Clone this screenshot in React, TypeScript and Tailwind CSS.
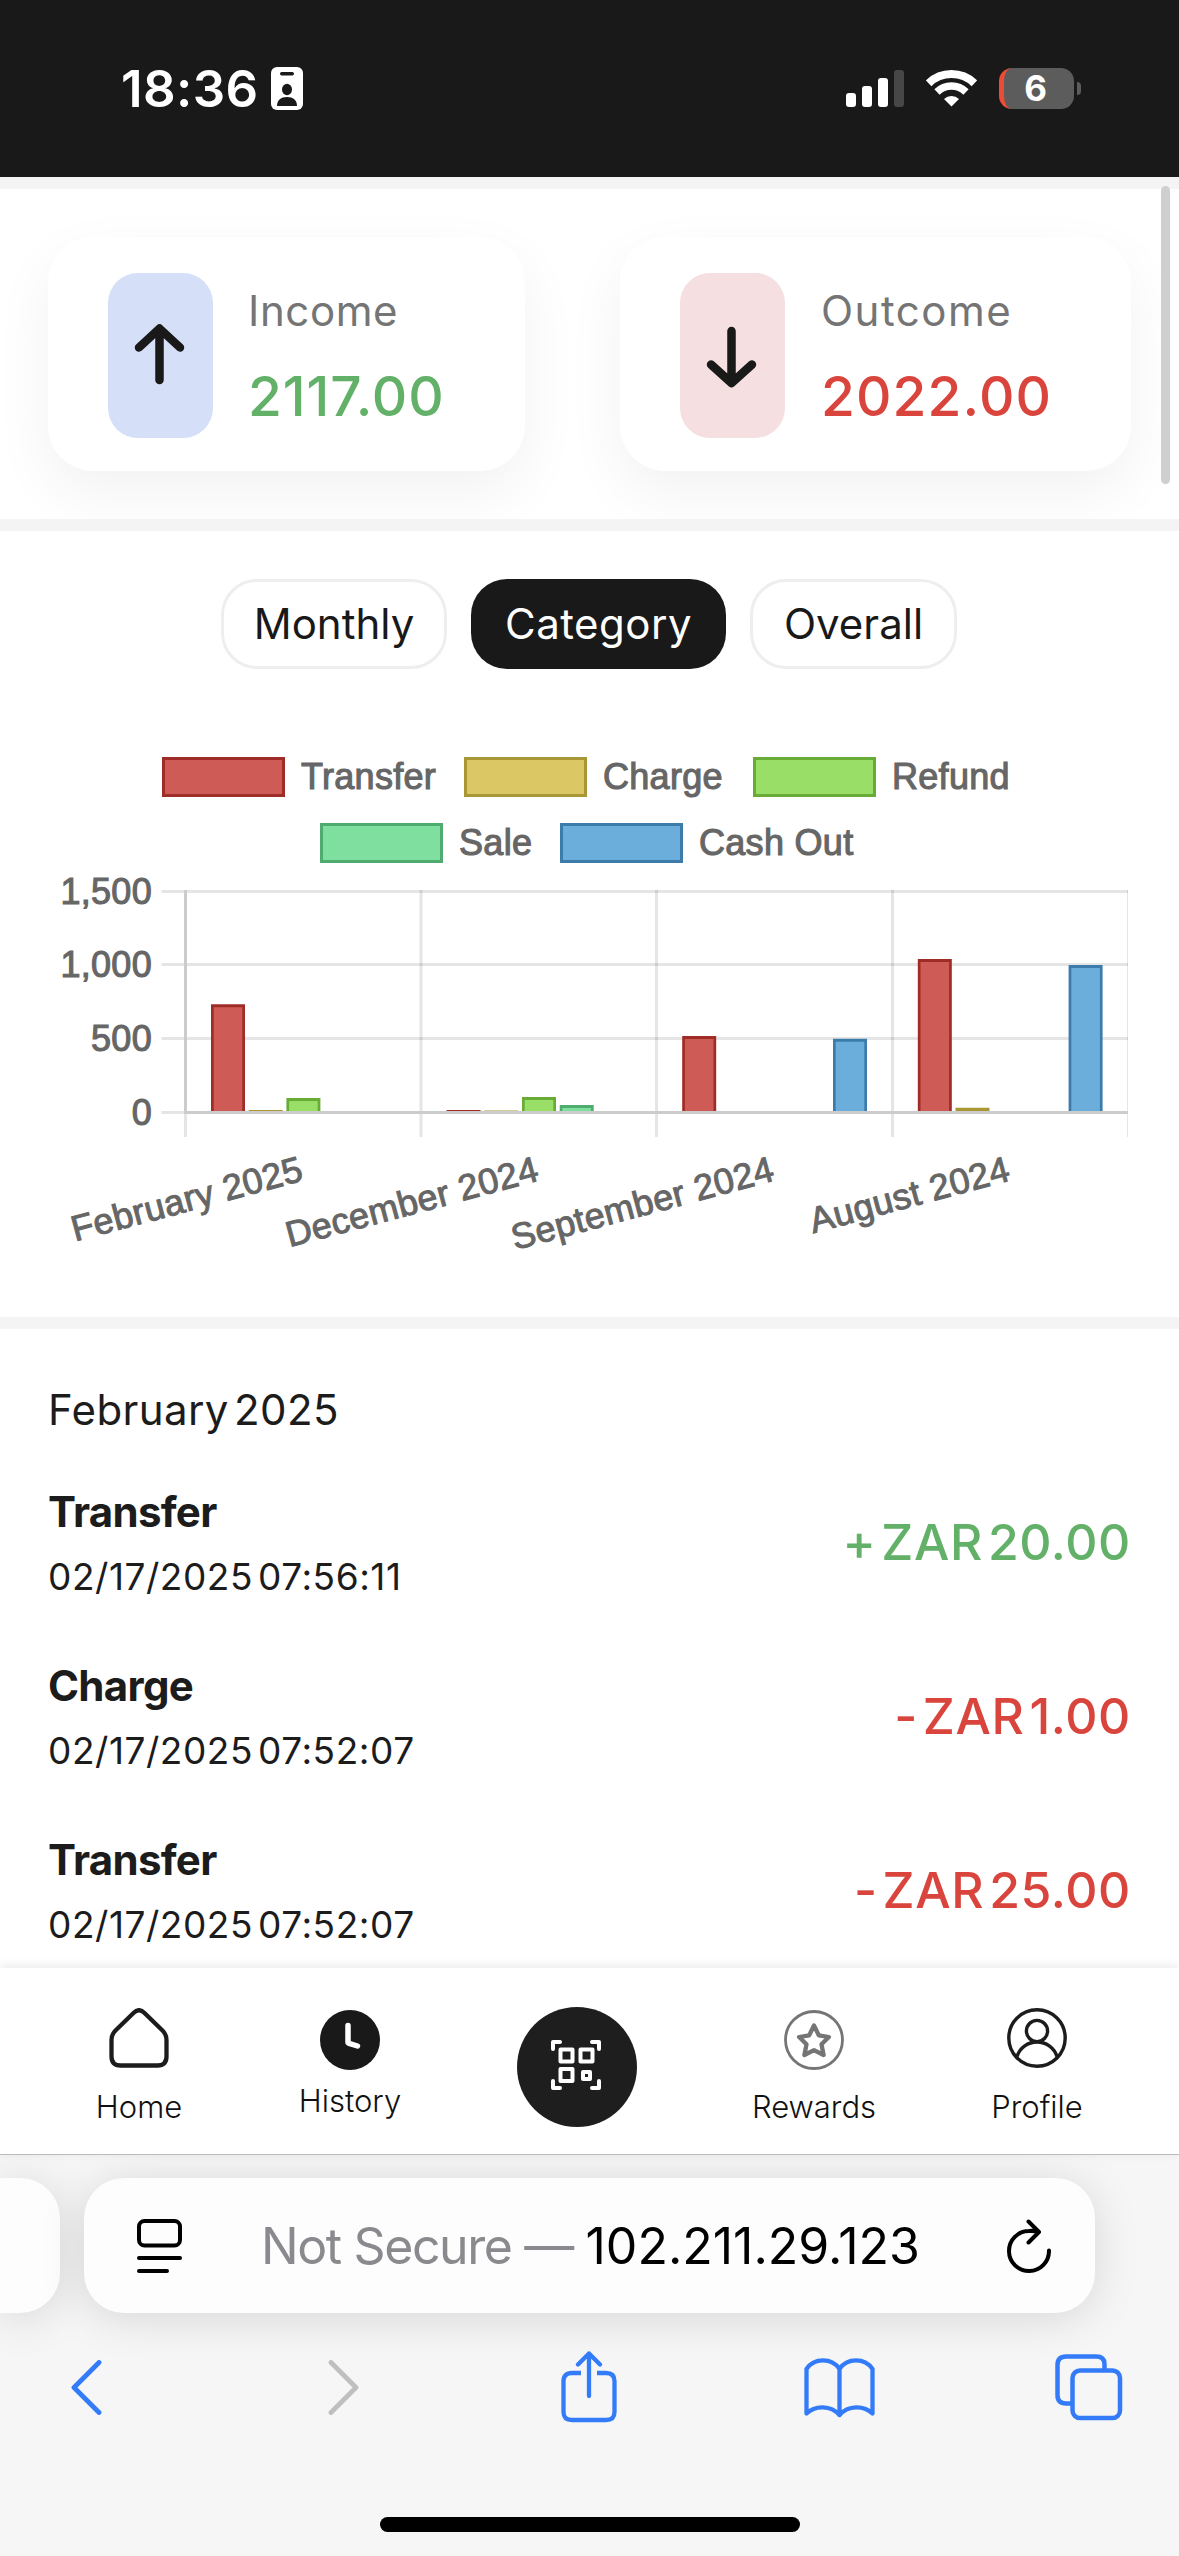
import type { ReactNode } from "react";

const categories = {
  transfer: { label: "Transfer", fill: "#cf5b56", border: "#a02c27" },
  charge: { label: "Charge", fill: "#dbc763", border: "#a99736" },
  refund: { label: "Refund", fill: "#99de66", border: "#68ab37" },
  sale: { label: "Sale", fill: "#7fdf9f", border: "#50ab70" },
  cashOut: { label: "Cash Out", fill: "#6baedb", border: "#3b7cab" },
};

type CategoryKey = keyof typeof categories;

const categoryKeys = Object.keys(categories) as CategoryKey[];

const legend: { key: CategoryKey; x: number; y: number }[] = [
  { key: "transfer", x: 162, y: 757 },
  { key: "charge", x: 464, y: 757 },
  { key: "refund", x: 753, y: 757 },
  { key: "sale", x: 320, y: 823 },
  { key: "cashOut", x: 560, y: 823 },
];

const months: { label: string; values: Partial<Record<CategoryKey, number>> }[] = [
  { label: "February 2025", values: { transfer: 735, charge: 17, refund: 98 } },
  { label: "December 2024", values: { transfer: 17, charge: 14, refund: 105, sale: 51 } },
  { label: "September 2024", values: { transfer: 519, cashOut: 500 } },
  { label: "August 2024", values: { transfer: 1041, charge: 32, cashOut: 1000 } },
];

const ticks = [
  { label: "1,500", y: 891.5 },
  { label: "1,000", y: 964.5 },
  { label: "500", y: 1038.5 },
  { label: "0", y: 1112.5 },
];

const transactions = [
  { title: "Transfer", date: "02/17/2025 07:56:11", amount: "+ ZAR 20.00", type: "in" },
  { title: "Charge", date: "02/17/2025 07:52:07", amount: "- ZAR 1.00", type: "out" },
  { title: "Transfer", date: "02/17/2025 07:52:07", amount: "- ZAR 25.00", type: "out" },
];

function StatusBar() {
  return (
    <header className="flex h-[177px] shrink-0 items-center bg-[#191919] pr-[98px] pb-px pl-[121px] text-white">
      <span className="w-[150px] text-[51px] leading-none font-semibold tracking-[0.4px] whitespace-nowrap">18:36</span>
      <svg width="32" height="43" viewBox="0 0 32 43">
        <rect width="32" height="43" rx="6" fill="#fff" />
        <rect x="9" y="5" width="14" height="3.5" rx="1.7" fill="#191919" />
        <ellipse cx="16" cy="22.5" rx="5" ry="5.7" fill="#191919" />
        <path d="M6 39 C6 33 10 30 16 30 S26 33 26 39 Z" fill="#191919" />
      </svg>
      <div className="ml-auto flex items-center gap-[22px]">
        <svg width="58" height="37" viewBox="0 0 58 37" fill="#fff">
          <rect x="0" y="23" width="10" height="14" rx="3" />
          <rect x="16" y="16" width="10" height="21" rx="3" />
          <rect x="32" y="8" width="10" height="29" rx="3" />
          <rect x="48" y="0" width="10" height="37" rx="3" fill="#474747" />
        </svg>
        <svg width="51" height="37" viewBox="0 0 51 37" fill="none" stroke="#fff">
          <path d="M2.6 13.3 A33 33 0 0 1 48.4 13.3" strokeWidth="8" />
          <path d="M11 22 A20.7 20.7 0 0 1 40 22" strokeWidth="7.5" />
          <path d="M25.5 36.5 L18 29 A11 11 0 0 1 33 29 Z" fill="#fff" stroke="none" />
        </svg>
        <div className="flex items-center gap-[3px]">
          <div className="flex h-[41px] w-[75px] items-center justify-center overflow-hidden rounded-[13px] border-l-[5px] border-[#ec4b36] bg-[#5c5c5c] pr-[7px] text-[35px] leading-none font-bold">
            6
          </div>
          <div className="h-[13px] w-1 rounded-r-full bg-[#5c5c5c]" />
        </div>
      </div>
    </header>
  );
}

function StatCards() {
  return (
    <section className="flex h-[342px] shrink-0 gap-[95px] border-t-[12px] border-[#f4f4f4] px-12 pt-12">
      <div className="flex h-[234px] w-[477px] gap-[35px] rounded-[45px] bg-white pt-9 pl-[60px] shadow-[0_22px_60px_rgba(0,0,0,0.055)]">
        <div className="h-[165px] w-[105px] rounded-[30px] bg-[#d5dff8]">
          <svg width="105" height="165" fill="none" stroke="#191919" strokeWidth="8.5" strokeLinecap="round" strokeLinejoin="round">
            <path d="M51.5 107 V56 M31 74.5 L51.5 55.5 L72 74.5" />
          </svg>
        </div>
        <div className="whitespace-nowrap">
          <div className="text-[42px] leading-[75px] tracking-[0.6px] text-[#757575]">Income</div>
          <div className="text-[55px] leading-[96px] font-medium tracking-[0.9px] text-[#63b168]">2117.00</div>
        </div>
      </div>
      <div className="flex h-[234px] w-[511px] gap-[36px] rounded-[45px] bg-white pt-9 pl-[60px] shadow-[0_22px_60px_rgba(0,0,0,0.055)]">
        <div className="h-[165px] w-[105px] rounded-[30px] bg-[#f6dfe0]">
          <svg width="105" height="165" fill="none" stroke="#191919" strokeWidth="8.5" strokeLinecap="round" strokeLinejoin="round">
            <path d="M51.5 58 V109 M31 91.5 L51.5 110 L72 91.5" />
          </svg>
        </div>
        <div className="whitespace-nowrap">
          <div className="text-[42px] leading-[75px] tracking-[1.5px] text-[#757575]">Outcome</div>
          <div className="text-[55px] leading-[96px] font-medium tracking-[1.1px] text-[#d9453d]">2022.00</div>
        </div>
      </div>
    </section>
  );
}

function CategoryChart() {
  return (
    <svg
      width="1179"
      height="648"
      viewBox="0 669 1179 648"
      className="block font-['Liberation_Sans',sans-serif] text-[36px] tracking-[0.3px]"
    >
      {legend.map(({ key, x, y }) => (
        <g key={key}>
          <rect
            x={x + 1.5}
            y={y + 1.5}
            width="120"
            height="37"
            fill={categories[key].fill}
            stroke={categories[key].border}
            strokeWidth="3"
          />
          <text x={x + 139} y={y + 32} fill="#666" stroke="#666" strokeWidth="1.1">
            {categories[key].label}
          </text>
        </g>
      ))}

      <g stroke="#000" strokeOpacity="0.1" strokeWidth="3">
        {ticks.map(({ y }) => (
          <path key={y} d={`M161.5 ${y} H1128`} />
        ))}
        {[185.5, 421, 656.5, 892.5].map((x) => (
          <path key={x} d={`M${x} 890 V1137`} />
        ))}
        <path d="M1127.5 890 V1137" strokeWidth="1" />
      </g>

      {months.map(({ label, values }, m) => (
        <g key={label}>
          {categoryKeys.map((key, c) => {
            const value = values[key];
            if (!value) return null;
            const left = 211 + m * 235.6 + c * 37.7;
            const top = 1112.5 - value * 0.1474;
            return (
              <g key={key}>
                <path d={`M${left} 1112 V${top} H${left + 34} V1112 Z`} fill={categories[key].border} />
                {top < 1107 && (
                  <path
                    d={`M${left + 2.7} 1112 V${top + 3} H${left + 31.3} V1112 Z`}
                    fill={categories[key].fill}
                  />
                )}
              </g>
            );
          })}
          <text
            textAnchor="end"
            fill="#666"
            stroke="#666"
            strokeWidth="1"
            transform={`translate(${305 + m * 235.6} 1180) rotate(-15)`}
          >
            {label}
          </text>
        </g>
      ))}

      {/* axis lines sit over the bars */}
      <path d="M185.5 890 V1112.5 M184 1112.5 H1128" stroke="#ccc" strokeWidth="3" fill="none" />

      {ticks.map(({ label, y }) => (
        <text key={label} x="152" y={y + 12} textAnchor="end" fill="#666" stroke="#666" strokeWidth="1.1">
          {label}
        </text>
      ))}
    </svg>
  );
}

function ChartSection() {
  return (
    <section className="h-[798px] shrink-0 border-t-[12px] border-[#f4f4f4] pt-12">
      <div className="flex h-[90px] justify-center gap-6 pr-px text-[42px] whitespace-nowrap">
        <button className="w-[226px] rounded-[36px] border-[3px] border-[#eee] pb-0.5 text-[#191919]">Monthly</button>
        <button className="w-[255px] rounded-[36px] bg-[#191919] pb-0.5 tracking-[0.5px] text-white">Category</button>
        <button className="w-[207px] rounded-[36px] border-[3px] border-[#eee] pb-0.5 text-[#191919]">Overall</button>
      </div>
      <CategoryChart />
    </section>
  );
}

function Transactions() {
  return (
    <section className="h-[651px] shrink-0 overflow-hidden border-t-[12px] border-[#f4f4f4] px-12 whitespace-nowrap text-[#1c1c1c]">
      <h2 className="pt-[35px] text-[42px] leading-[91px] tracking-[0.4px] [word-spacing:-7px]">February 2025</h2>
      {transactions.map((item, index) => (
        <div key={index} className="flex h-[174px] items-center justify-between">
          <div className="pt-1">
            <div className="text-[42px] leading-[65px] font-bold tracking-[-0.7px]">{item.title}</div>
            <div className="text-[37px] leading-[65px] tracking-[0.55px] [word-spacing:-6px]">{item.date}</div>
          </div>
          {item.type === "in" ? (
            <div className="text-[50px] leading-none font-medium tracking-[0.6px] text-[#63b168] [word-spacing:-9px]">
              {item.amount}
            </div>
          ) : (
            <div className="text-[50px] leading-none font-medium tracking-[0.6px] text-[#d9453d] [word-spacing:-9px]">
              {item.amount}
            </div>
          )}
        </div>
      ))}
    </section>
  );
}

function NavItem({ label, className, children }: { label: string; className: string; children: ReactNode }) {
  return (
    <div className={`flex flex-col items-center ${className}`}>
      <svg width="60" height="60" viewBox="0 0 60 60" fill="none" strokeLinecap="round" strokeLinejoin="round">
        {children}
      </svg>
      <span className="text-[31px] leading-[38px] font-light text-[#111]">{label}</span>
    </div>
  );
}

function BottomNav() {
  return (
    <nav className="relative grid h-[187px] shrink-0 grid-cols-[212px_212px_240px_234px_212px] border-b border-[#bbb] bg-white pl-[33px] shadow-[0_-2px_10px_rgba(0,0,0,0.09)]">
      <NavItem label="Home" className="gap-5 pt-10">
        <path
          d="M24.5 5 Q30 -0.5 35.5 5 L53.5 22.5 Q57.5 26.5 57.5 32 V48.5 Q57.5 57.5 48.5 57.5 H11.5 Q2.5 57.5 2.5 48.5 V32 Q2.5 26.5 6.5 22.5 Z"
          stroke="#1c1c1c"
          strokeWidth="4.3"
        />
      </NavItem>
      <NavItem label="History" className="gap-3 pt-[42px] pr-0.5">
        <circle cx="30" cy="30" r="30" fill="#191919" />
        <path d="M28 15.5 V32 Q28 33 29 33.3 L37.5 36" stroke="#fff" strokeWidth="5.5" />
      </NavItem>
      <div className="flex justify-center pt-[39px]">
        <svg
          width="120"
          height="120"
          viewBox="0 0 120 120"
          fill="none"
          stroke="#fff"
          strokeWidth="4"
          strokeLinecap="round"
          strokeLinejoin="round"
        >
          <circle cx="60" cy="60" r="60" fill="#1e1e1e" stroke="none" />
          <path d="M36 42 V35 H43 M75 35 H82 V42 M82 74 V81 H75 M43 81 H36 V74" />
          <rect x="43.5" y="42.5" width="12" height="12" />
          <rect x="63.5" y="42.5" width="12" height="12" />
          <rect x="43.5" y="62" width="12" height="12" />
          <rect x="66" y="65" width="7" height="7" />
        </svg>
      </div>
      <NavItem label="Rewards" className="gap-[18px] pt-[42px]">
        <circle cx="30" cy="30" r="28.5" stroke="#757575" strokeWidth="2.8" />
        <path
          d="M30 15.5 L34.8 25.3 L44.9 27 L37.5 34.3 L39.6 45 L30 40.2 L20.4 45 L22.5 34.3 L15.1 27 L25.2 25.3 Z"
          stroke="#757575"
          strokeWidth="4.3"
        />
      </NavItem>
      <NavItem label="Profile" className="gap-5 pt-10">
        <g stroke="#1c1c1c" strokeWidth="3.4">
          <circle cx="30" cy="30" r="28.2" />
          <circle cx="30" cy="23" r="10.6" />
          <path d="M10 48.5 C13 39.5 21 34 30 34 S47 39.5 50 48.5" />
        </g>
      </NavItem>
    </nav>
  );
}

function AddressBar() {
  return (
    <div className="mt-[23px] flex h-[135px] gap-6">
      <div className="w-[60px] rounded-r-[40px] bg-[#fdfdfd] shadow-[0_5px_45px_rgba(0,0,0,0.13)]" />
      <div className="flex w-[1011px] items-center rounded-[40px] bg-[#fdfdfd] pl-[53px] shadow-[0_5px_45px_rgba(0,0,0,0.13)]">
        <svg width="45" height="54" viewBox="0 0 45 54" fill="none" stroke="#000" strokeWidth="4" strokeLinecap="round">
          <rect x="2" y="2" width="41" height="24.5" rx="5.5" />
          <path d="M2 39 H43 M2 52 H30" />
        </svg>
        <div className="ml-[79px] w-[666px] text-[50px] leading-none whitespace-nowrap">
          <span className="tracking-[-1.4px] text-[#8a8a8e]">Not Secure — </span>
          <span className="text-black">102.211.29.123</span>
        </div>
        <svg
          width="44"
          height="54"
          viewBox="0 0 44 54"
          className="ml-[80px]"
          fill="none"
          stroke="#000"
          strokeWidth="4"
          strokeLinecap="round"
          strokeLinejoin="round"
        >
          <path d="M42 31.5 A20 20 0 1 1 22 12 Q27 11.5 31 13 M21.5 2.5 L32 13 L21.5 23.5" />
        </svg>
      </div>
    </div>
  );
}

function Toolbar() {
  return (
    <div className="mt-[38px] flex h-[73px] items-center pl-[71px]">
      <svg width="31" height="55" fill="none" stroke="#337bf8" strokeWidth="4.8" strokeLinecap="round" strokeLinejoin="round">
        <path d="M28 2.5 L3 27.5 L28 52.5" />
      </svg>
      <svg
        width="31"
        height="55"
        className="ml-[226px]"
        fill="none"
        stroke="#bfbfbf"
        strokeWidth="4.8"
        strokeLinecap="round"
        strokeLinejoin="round"
      >
        <path d="M3 2.5 L28 27.5 L3 52.5" />
      </svg>
      <svg
        width="56"
        height="73"
        className="ml-[202px]"
        fill="none"
        stroke="#337bf8"
        strokeWidth="4.3"
        strokeLinejoin="round"
      >
        <path d="M20 22 H11 Q2.5 22 2.5 30 V61 Q2.5 69 11 69 H45 Q53.5 69 53.5 61 V30 Q53.5 22 45 22 H36" />
        <path d="M28 2.5 V45 M17 13.5 L28 2.5 L39 13.5" strokeLinecap="round" />
      </svg>
      <svg
        width="71"
        height="60"
        className="ml-[187px]"
        fill="none"
        stroke="#337bf8"
        strokeWidth="4.3"
        strokeLinecap="round"
        strokeLinejoin="round"
      >
        <path d="M2.5 11 C10 -0.5 28 -0.5 35.5 11 C43 -0.5 61 -0.5 68.5 11 V55.5 C60 47 44 47 35.5 57 C27 47 11 47 2.5 55.5 Z M35.5 11 V57" />
      </svg>
      <svg width="68" height="68" className="ml-[180px]" fill="none" stroke="#337bf8" strokeWidth="4.5">
        <path d="M16 49.5 H11 Q2.5 49.5 2.5 41 V11 Q2.5 2.5 11 2.5 H41 Q49.5 2.5 49.5 10 V15" />
        <rect x="17.5" y="16.5" width="47.5" height="47.5" rx="7.5" />
      </svg>
    </div>
  );
}

export default function App() {
  return (
    <div className="relative flex h-[2556px] w-[1179px] flex-col overflow-hidden bg-white font-[Inter,sans-serif]">
      <StatusBar />
      <StatCards />
      <ChartSection />
      <Transactions />
      <BottomNav />
      <footer className="flex-1 bg-[#f6f6f6]">
        <AddressBar />
        <Toolbar />
        <div className="mx-auto mt-[93px] h-[15px] w-[420px] rounded-full bg-black" />
      </footer>
      {/* scroll indicator */}
      <div className="absolute top-[186px] right-[9px] h-[298px] w-[9px] rounded-full bg-[#cfcfcf]" />
    </div>
  );
}
